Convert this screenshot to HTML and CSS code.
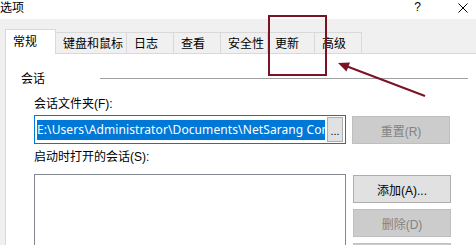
FILE: index.html
```html
<!DOCTYPE html>
<html lang="zh-CN">
<head>
    <meta charset="UTF-8">
    <title>选项</title>
    <link rel="stylesheet" href="styles.css">
</head>
<body>
    <div class="titlebar">
        <span class="title">选项</span>
        <span class="help">?</span>
        <svg class="close" width="10" height="10" viewBox="0 0 10 10">
            <path d="M0.5 0.5 L9.5 9.5 M9.5 0.5 L0.5 9.5" stroke="#000" stroke-width="1" fill="none"/>
        </svg>
    </div>

    <div class="dialog">
        <div class="tabs">
            <div class="tab active">常规</div>
            <div class="tab wide">键盘和鼠标</div>
            <div class="tab">日志</div>
            <div class="tab">查看</div>
            <div class="tab">安全性</div>
            <div class="tab">更新</div>
            <div class="tab">高级</div>
        </div>

        <div class="page">
            <div class="group-title">
                <span class="group-label">会话</span>
                <span class="group-line"></span>
            </div>

            <div class="field">
                <div class="label folder-label">会话文件夹(F):</div>
                <div class="row">
                    <div class="path-box">
                        <div class="path"><span class="selected">E:\Users\Administrator\Documents\NetSarang Computer\7\Xshell\Sessions</span></div>
                        <button class="browse">...</button>
                    </div>
                    <button class="btn disabled reset">重置(R)</button>
                </div>

                <div class="label startup-label">启动时打开的会话(S):</div>
                <div class="row list-row">
                    <div class="listbox"></div>
                    <div class="side-buttons">
                        <button class="btn">添加(A)...</button>
                        <button class="btn disabled">删除(D)</button>
                        <button class="btn disabled">上移(U)</button>
                    </div>
                </div>
            </div>
        </div>
    </div>

    <!-- annotation drawn over the screenshot -->
    <svg class="markup" width="476" height="245" viewBox="0 0 476 245">
        <rect x="269" y="16" width="57" height="59" fill="none" stroke="#7b1324" stroke-width="2"/>
        <line x1="425" y1="96" x2="346" y2="66" stroke="#7b1324" stroke-width="2"/>
        <polygon points="338,63 350,62.5 346.5,71.5" fill="#7b1324"/>
    </svg>
</body>
</html>
```

FILE: styles.css
```css
body {
    margin: 0;
    width: 476px;
    height: 245px;
    overflow: hidden;
    position: relative;
    background-color: #fff;
    font-family: "Liberation Sans", "Noto Sans CJK SC", sans-serif;
    font-size: 12px;
    color: #000;
}
.titlebar {
    height: 19px;
    display: flex;
    align-items: flex-start;
}
.title {
    line-height: 14px;
    font-family: "Noto Sans CJK SC", sans-serif;
}
.help {
    margin-left: auto;
    margin-top: 1px;
    line-height: 13px;
    font-size: 12px;
}
.close {
    margin: 3px 8px 0 37px;
}
.dialog {
    background-color: #f0f0f0;
    padding: 10px 0 0 5px;
    height: 216px;
}
.tabs {
    display: flex;
    align-items: flex-start;
    height: 24px;
    font-family: "Noto Sans CJK SC", sans-serif;
}
.tab {
    box-sizing: border-box;
    height: 21px;
    margin-top: 3px;
    min-width: 47px;
    padding: 0 3px 0 7px;
    border-top: 1px solid #d9d9d9;
    border-right: 1px solid #d9d9d9;
    line-height: 20px;
    white-space: nowrap;
}
.tab.active {
    position: relative;
    z-index: 1;
    width: 51px;
    height: 25px;
    margin-top: 0;
    border-left: 1px solid #d9d9d9;
    background-color: #fff;
    line-height: 21px;
}
.page {
    background-color: #fff;
    border-top: 1px solid #d9d9d9;
    border-left: 1px solid #d9d9d9;
    height: 200px;
}
.group-title {
    display: flex;
    align-items: center;
    height: 16px;
    margin: 16px 8px 0 15px;
    font-family: "Noto Sans CJK SC", sans-serif;
}
.group-label {
    width: 79px;
    line-height: 16px;
}
.group-line {
    flex: 1;
    height: 1px;
    background-color: #a0a0a0;
}
.field {
    padding-left: 28px;
}
.label {
    line-height: 16px;
}
.folder-label {
    margin-top: 10px;
}
.startup-label {
    margin-top: 5px;
}
.row {
    display: flex;
    align-items: flex-start;
}
.path-box {
    box-sizing: border-box;
    display: flex;
    align-items: center;
    width: 312px;
    height: 29px;
    margin-top: 3px;
    padding: 1px;
    border: 1px solid #0078d7;
}
.path {
    flex: 1;
    overflow: hidden;
    white-space: nowrap;
    margin-left: 1px;
}
.selected {
    display: inline-block;
    background-color: #0078d7;
    color: #fff;
    font-family: "Noto Sans", "Liberation Sans", sans-serif;
    letter-spacing: 0.1px;
    line-height: 20px;
}
.browse {
    box-sizing: border-box;
    width: 16px;
    height: 25px;
    margin-left: 2px;
    margin-right: 1px;
    padding: 0;
    border: 1px solid #adadad;
    background-color: #e1e1e1;
    font-family: "Liberation Sans", sans-serif;
    font-size: 11px;
    line-height: 26px;
}
.btn {
    box-sizing: border-box;
    width: 98px;
    height: 28px;
    padding: 0;
    border: 1px solid #adadad;
    background-color: #e1e1e1;
    font-family: "Liberation Sans", "Noto Sans CJK SC", sans-serif;
    font-size: 12px;
    color: #000;
}
.btn.disabled {
    background-color: #cccccc;
    border-color: #bfbfbf;
    color: #838383;
}
.reset {
    margin-left: 6px;
    margin-top: 4px;
}
.list-row {
    margin-top: 9px;
}
.listbox {
    box-sizing: border-box;
    width: 312px;
    height: 100px;
    border: 1px solid #828790;
}
.side-buttons {
    display: flex;
    flex-direction: column;
    gap: 6px;
    margin-left: 7px;
    margin-top: 1px;
}
.markup {
    position: absolute;
    top: 0;
    left: 0;
    pointer-events: none;
}
```
